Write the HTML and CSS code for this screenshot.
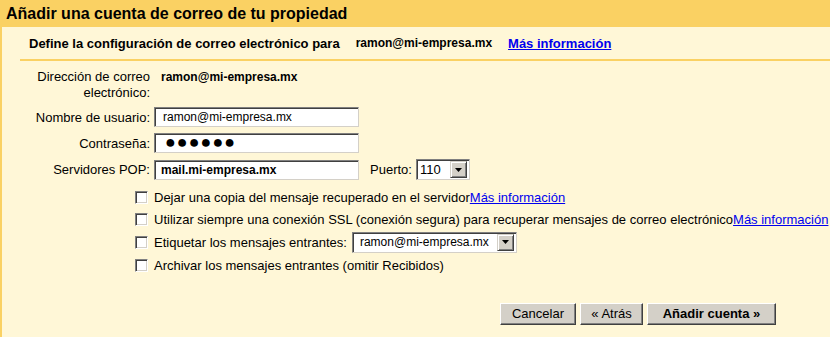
FILE: index.html
```html
<!DOCTYPE html>
<html lang="es">
<head>
<meta charset="utf-8">
<title>Añadir una cuenta de correo</title>
<link rel="stylesheet" href="styles.css">
</head>
<body>
<div class="titlebar">Añadir una cuenta de correo de tu propiedad</div>
<div class="content">
  <div class="subhead">
    <span>Define la configuración de correo electrónico para</span>
    <span class="addr">ramon@mi-empresa.mx</span>
    <a class="link link-bold" href="#">Más información</a>
  </div>

  <div class="form">
    <div class="row row-addr">
      <div class="label">Dirección de correo electrónico:</div>
      <div class="value">ramon@mi-empresa.mx</div>
    </div>
    <div class="row">
      <div class="label">Nombre de usuario:</div>
      <div class="field">ramon@mi-empresa.mx</div>
    </div>
    <div class="row">
      <div class="label">Contraseña:</div>
      <div class="field field-pass">●●●●●●</div>
    </div>
    <div class="row">
      <div class="label">Servidores POP:</div>
      <div class="field field-bold">mail.mi-empresa.mx</div>
      <div class="port-label">Puerto:</div>
      <div class="select select-port">
        <span class="select-text">110</span>
        <span class="select-btn"><svg width="7" height="4" viewBox="0 0 7 4"><path d="M0 0H7L3.5 4Z" fill="#000"/></svg></span>
      </div>
    </div>
  </div>

  <div class="options">
    <div class="opt">
      <input type="checkbox" class="cb">
      <span>Dejar una copia del mensaje recuperado en el servidor<a class="link" href="#">Más información</a></span>
    </div>
    <div class="opt">
      <input type="checkbox" class="cb">
      <span>Utilizar siempre una conexión SSL (conexión segura) para recuperar mensajes de correo electrónico<a class="link" href="#">Más información</a></span>
    </div>
    <div class="opt opt-select">
      <input type="checkbox" class="cb">
      <span>Etiquetar los mensajes entrantes:</span>
      <div class="select select-label">
        <span class="select-text">ramon@mi-empresa.mx</span>
        <span class="select-btn"><svg width="7" height="4" viewBox="0 0 7 4"><path d="M0 0H7L3.5 4Z" fill="#000"/></svg></span>
      </div>
    </div>
    <div class="opt">
      <input type="checkbox" class="cb">
      <span>Archivar los mensajes entrantes (omitir Recibidos)</span>
    </div>
  </div>

  <div class="actions">
    <button class="btn btn-cancel" type="button">Cancelar</button>
    <button class="btn btn-back" type="button">« Atrás</button>
    <button class="btn btn-primary" type="button">Añadir cuenta »</button>
  </div>
</div>
</body>
</html>
```
FILE: styles.css
```css
html, body {
  margin: 0;
  padding: 0;
}
body {
  font-family: "Liberation Sans", Arial, sans-serif;
  font-size: 13px;
  color: #000;
  background: #fff7d7;
  width: 830px;
  height: 337px;
  overflow: hidden;
}
.titlebar {
  height: 27px;
  box-sizing: border-box;
  background: #fad163;
  font-size: 16px;
  font-weight: bold;
  line-height: 27px;
  padding-left: 6px;
  white-space: nowrap;
}
.content {
  border-left: 2px solid #fad163;
  height: 310px;
  box-sizing: border-box;
}
.subhead {
  margin-left: 18px;
  padding-left: 9px;
  height: 32px;
  border-bottom: 2px solid #fad163;
  display: flex;
  align-items: center;
  font-weight: bold;
  white-space: nowrap;
}
.addr {
  margin-left: 16px;
  font-size: 12px;
}
.link {
  color: #0000ee;
  text-decoration: underline;
}
.link-bold {
  margin-left: 16px;
  font-weight: bold;
}
.form {
  margin-top: 8px;
  padding-left: 18px;
  display: flex;
  flex-direction: column;
  gap: 6px;
}
.row {
  display: flex;
  align-items: center;
  gap: 4px;
}
.row-addr {
  align-items: flex-start;
  line-height: 16px;
}
.label {
  width: 130px;
  text-align: right;
  flex: none;
}
.value {
  font-weight: bold;
  font-size: 12px;
  padding-left: 7px;
}
.field {
  width: 205px;
  height: 20px;
  box-sizing: border-box;
  background: #fff;
  border: 1px solid;
  border-color: #808080 #d4d0c8 #d4d0c8 #808080;
  box-shadow: inset 1px 1px #404040, inset -1px -1px #fff;
  padding-left: 8px;
  font-size: 12px;
  line-height: 18px;
  white-space: nowrap;
}
.field-pass {
  font-size: 18px;
  letter-spacing: 1px;
  padding-left: 10px;
  line-height: 17px;
}
.field-bold {
  font-weight: bold;
  padding-left: 6px;
}
.port-label {
  margin-left: 7px;
}
.select {
  height: 21px;
  box-sizing: border-box;
  background: #fff;
  border: 1px solid;
  border-color: #808080 #d4d0c8 #d4d0c8 #808080;
  box-shadow: inset 1px 1px #404040, inset -1px -1px #fff;
  display: flex;
  align-items: center;
  justify-content: space-between;
  padding: 2px;
}
.select-port {
  width: 54px;
}
.select-port .select-text {
  font-size: 13px;
}
.select-label {
  width: 165px;
  margin-left: 5px;
}
.select-text {
  padding-left: 1px;
  font-size: 12px;
  white-space: nowrap;
}
.select-label .select-text {
  padding-left: 5px;
}
.select-btn {
  width: 17px;
  height: 17px;
  box-sizing: border-box;
  background: #d4d0c8;
  border: 1px solid;
  border-color: #d4d0c8 #404040 #404040 #d4d0c8;
  box-shadow: inset 1px 1px #fff, inset -1px -1px #808080;
  display: flex;
  align-items: center;
  justify-content: center;
}
.options {
  margin-top: 6px;
  padding-left: 133px;
}
.opt {
  height: 22px;
  display: flex;
  align-items: center;
  white-space: nowrap;
}
.opt-select {
  height: 24px;
}
.cb {
  appearance: none;
  -webkit-appearance: none;
  width: 13px;
  height: 13px;
  margin: 0 6px 0 0;
  box-sizing: border-box;
  background: #fff;
  border: 1px solid;
  border-color: #808080 #fff #fff #808080;
  box-shadow: inset 1px 1px #404040, inset -1px -1px #d4d0c8;
  flex: none;
}
.actions {
  margin-top: 27px;
  padding-right: 54px;
  display: flex;
  justify-content: flex-end;
  gap: 4px;
}
.btn {
  height: 22px;
  box-sizing: border-box;
  font-family: "Liberation Sans", Arial, sans-serif;
  font-size: 13px;
  color: #000;
  background: #d4d0c8;
  border: 1px solid;
  border-color: #fff #404040 #404040 #fff;
  box-shadow: inset -1px -1px #808080;
  padding: 0;
  margin: 0;
  line-height: 18px;
  white-space: nowrap;
  text-align: center;
}
.btn-cancel {
  width: 76px;
}
.btn-back {
  width: 63px;
}
.btn-primary {
  width: 129px;
  font-weight: bold;
}
```
